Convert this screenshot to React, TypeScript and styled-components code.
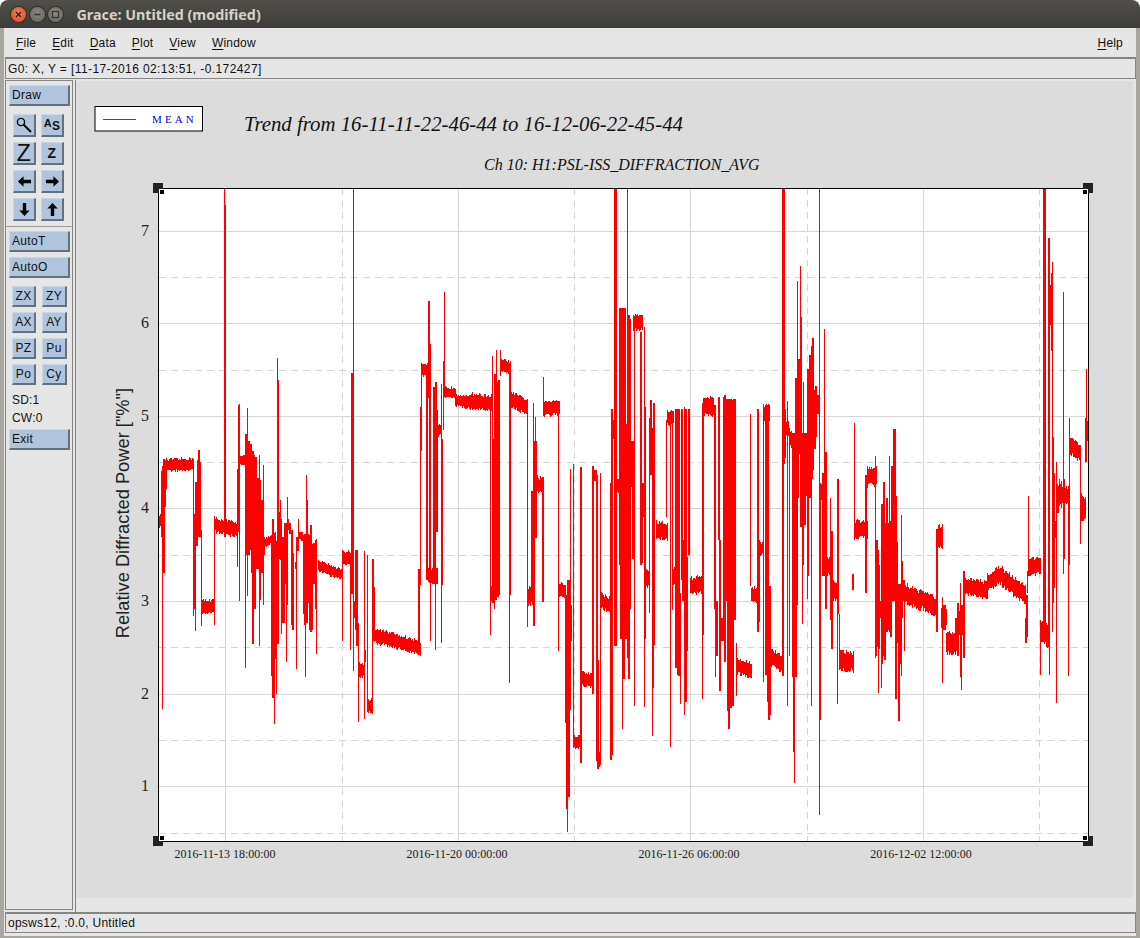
import React from 'react';
import styled, {createGlobalStyle} from 'styled-components';

const GlobalStyle = createGlobalStyle`
  html, body {
    margin: 0;
    padding: 0;
    background: #fff;
  }
`;

const Window = styled.div`
  width: 1140px;
  height: 938px;
  display: flex;
  flex-direction: column;
  overflow: hidden;
  font-family: "Liberation Sans", Arial, sans-serif;
  font-size: 12px;
  color: #111;
`;

const TitleBar = styled.header`
  height: 28px;
  flex: none;
  display: flex;
  align-items: center;
  padding-left: 11px;
  border-radius: 8px 8px 0 0;
  background: linear-gradient(#504f4a, #3d3c38);
`;

const WinButton = styled.span<{$close?: boolean}>`
  width: 15px;
  height: 15px;
  margin-right: 3.5px;
  border-radius: 50%;
  display: flex;
  align-items: center;
  justify-content: center;
  background: ${p => p.$close
    ? 'radial-gradient(circle at 50% 40%, #f0805a, #d8481c)'
    : 'radial-gradient(circle at 50% 40%, #8a8880, #62605a)'};
  box-shadow: 0 0 0 1px #2e2d2a;
`;

const TitleText = styled.span`
  margin-left: 10px;
  font-family: "Noto Sans", sans-serif;
  font-weight: 700;
  font-size: 14.3px;
  color: #d6d2c6;
`;

const Body = styled.div`
  flex: 1;
  min-height: 0;
  display: flex;
  flex-direction: column;
  padding: 0 4px 3px;
  background: linear-gradient(90deg, #a9a69f 4px, #e6e6e6 4px, #e6e6e6 1136px, #a9a69f 1136px);
`;

const MenuBar = styled.nav`
  height: 29px;
  flex: none;
  display: flex;
  align-items: center;
  gap: 16px;
  padding: 0 13px 0 12px;
  background: #e6e6e6;
`;

const MenuItem = styled.span<{$right?: boolean}>`
  letter-spacing: 0.2px;
  ${p => p.$right && 'margin-left: auto;'}

  > u {
    text-underline-offset: 2px;
    text-decoration-thickness: 1px;
  }
`;

const InfoLine = styled.div`
  height: 22px;
  flex: none;
  box-sizing: border-box;
  display: flex;
  align-items: center;
  padding-left: 2px;
  margin-left: 1px;
  background: #e6e6e6;
  border: 1px solid #858585;
  border-top-width: 2px;
  letter-spacing: 0.4px;
`;

const Main = styled.div`
  flex: 1;
  min-height: 0;
  display: flex;
  margin-top: 1px;
`;

const SidePanel = styled.aside`
  width: 68px;
  flex: none;
  box-sizing: border-box;
  margin: 0 0 2px 1px;
  padding: 4px 0 0 3px;
  display: flex;
  flex-direction: column;
  background: #e6e6e6;
  border: 1px solid #858585;
`;

const Bevel = styled.button`
  box-sizing: border-box;
  padding: 0;
  margin: 0;
  display: flex;
  align-items: center;
  font: inherit;
  letter-spacing: 0.3px;
  color: #111;
  background: #b0c4de;
  border-style: solid;
  border-width: 1px 2px 2px 1px;
  border-color: #c9d6e8 #63707f #63707f #c9d6e8;
`;

const WideButton = styled(Bevel)`
  width: 61px;
  height: 21px;
  padding-left: 2px;
`;

const IconGrid = styled.div`
  display: grid;
  grid-template-columns: 22px 22px;
  grid-auto-rows: 22px;
  gap: 6px;
  padding: 8px 0 0 4px;
`;

const IconButton = styled(Bevel)`
  width: 23px;
  height: 23px;
  justify-content: center;
`;

const BigZ = styled.span`
  font-size: 23px;
  line-height: 1;
`;

const SmallZ = styled.span`
  font-size: 14px;
  font-weight: 700;
  line-height: 1;
`;

const AS = styled.span`
  font-size: 11px;
  font-weight: 700;
  line-height: 1;
  margin-top: -4px;

  > b {
    position: relative;
    top: 3px;
    font-size: 12px;
  }
`;

const Separator = styled.hr`
  width: 66px;
  height: 1px;
  margin: 6px 0 4px -3px;
  border: 0;
  background: #9a9a9a;
`;

const AutoButton = styled(WideButton)`
  margin-bottom: 5px;
`;

const TextGrid = styled.div`
  display: grid;
  grid-template-columns: 24px 25px;
  grid-auto-rows: 21px;
  gap: 5px 6px;
  padding: 3px 0 0 3px;
`;

const TextButton = styled(Bevel)`
  justify-content: center;
`;

const ReadOut = styled.div`
  height: 18px;
  display: flex;
  align-items: center;
  padding-left: 3px;
  letter-spacing: 0.2px;
`;

const ReadOuts = styled.div`
  display: flex;
  flex-direction: column;
  padding: 6px 0 2px;
`;

const CanvasArea = styled.div`
  flex: 1;
  min-width: 0;
  margin-left: 2px;
  padding: 1px 3px 0 0;
  border-left: 1px solid #858585;
  background: #e6e6e6;
`;

const PlotCanvas = styled.svg`
  display: block;
  width: 1057px;
  height: 817px;
  background: #dcdcdc;
`;

const StatusBar = styled.footer`
  height: 21px;
  flex: none;
  box-sizing: border-box;
  margin-left: 1px;
  display: flex;
  align-items: center;
  padding-left: 2px;
  background: #e6e6e6;
  border: 1px solid #858585;
  border-top-width: 2px;
  border-bottom-width: 1px;
  letter-spacing: 0.25px;
`;

const BottomEdge = styled.div`
  height: 2px;
  flex: none;
  background: #a9a69f;
`;

const arrow = (deg: number) => (
  <svg width="15" height="15" viewBox="0 0 16 16" style={{transform: `rotate(${deg}deg)`}}>
    <path d="M1 8 L7 2.5 V6.2 H15 V9.8 H7 V13.5 Z" fill="#000"/>
  </svg>
);

// [x, top, bottom, width] of spikes and [x0, x1, y0, y1, half] of noisy plateaus,
// read off crops of the plot; each section has its own offset and scale
type Section = {ox: number; sy: number; bands: number[][]; spikes: number[][]};

const sections: Section[] = [
  {
    ox: 155,
    sy: 2.8,
    bands: [
      [12, 26, 955, 955, 18], [30, 115, 800, 795, 17], [118, 135, 965, 965, 30], [140, 178, 1195, 1195, 20],
      [178, 246, 965, 980, 20], [250, 270, 785, 785, 15], [330, 360, 1015, 1000, 12], [490, 560, 1080, 1105, 15],
      [562, 590, 1055, 1060, 18], [597, 603, 1200, 1200, 20], [612, 628, 1372, 1372, 20], [637, 652, 1472, 1472, 20],
      [658, 795, 1275, 1310, 20], [798, 818, 530, 530, 17], [820, 845, 1110, 1110, 20], [850, 858, 700, 700, 15],
      [868, 900, 595, 595, 15], [900, 960, 615, 625, 17]
    ],
    spikes: [
      [209, 24, 70, 2], [209, 70, 1000, 5], [22, 800, 1480, 2], [19, 815, 1000, 2], [26, 780, 1100, 3], [30, 810, 915, 2], [33, 785, 865, 3],
      [115, 780, 1222, 2], [118, 935, 1200, 3], [121, 890, 1262, 2], [124, 845, 1025, 3], [127, 785, 1025, 2], [133, 756, 1000, 3],
      [136, 790, 1000, 2], [139, 980, 1250, 2], [178, 950, 1245, 2], [248, 810, 1083, 2], [251, 630, 985, 4], [253, 628, 1178, 2],
      [271, 740, 1365, 2], [274, 710, 1050, 4], [277, 638, 1165, 2], [281, 730, 1050, 6], [287, 740, 1035, 6], [290, 760, 1100, 2],
      [295, 760, 1300, 3], [298, 770, 1120, 4], [301, 780, 1200, 3], [304, 775, 1000, 3], [308, 835, 1090, 6], [313, 770, 1305, 2],
      [316, 840, 1175, 5], [320, 895, 1100, 5], [325, 798, 1190, 2], [328, 1000, 1050, 4], [355, 950, 1450, 3], [352, 1000, 1390, 3],
      [358, 1000, 1522, 2], [361, 1000, 1340, 4], [364, 1010, 1438, 2], [367, 498, 1050, 2], [370, 560, 1300, 3], [373, 930, 1060, 5],
      [376, 895, 1065, 2], [379, 950, 1270, 2], [382, 1000, 1240, 5], [386, 1000, 1240, 5], [390, 960, 1130, 3], [394, 960, 1350, 2],
      [397, 888, 1190, 2], [400, 950, 980, 5], [406, 960, 990, 5], [412, 980, 1245, 3], [415, 1045, 1260, 3], [421, 1070, 1090, 2],
      [424, 1000, 1368, 2], [428, 1000, 1040, 4], [431, 948, 1000, 2], [436, 985, 1005, 6], [442, 985, 1010, 5], [446, 995, 1215, 3],
      [449, 990, 1245, 5], [451, 1000, 1392, 2], [454, 827, 1000, 2], [457, 895, 1240, 3], [460, 990, 1185, 3], [463, 1000, 1070, 3],
      [466, 995, 1260, 3], [469, 965, 1265, 3], [472, 1020, 1260, 2], [478, 1015, 1130, 3], [482, 1008, 1200, 5], [485, 1005, 1327, 2],
      [562, 1035, 1290, 2], [587, 1060, 1315, 2], [590, 1050, 1160, 4], [592, 540, 1160, 3], [595, 24, 1375, 2], [598, 1185, 1225, 2],
      [604, 1035, 1260, 3], [607, 1035, 1305, 3], [611, 1240, 1518, 2], [628, 1040, 1508, 2], [631, 1315, 1350, 4], [637, 1050, 1490, 2],
      [652, 1075, 1495, 2], [655, 1060, 1230, 3], [658, 1140, 1290, 3], [793, 1090, 1330, 3], [796, 635, 1135, 2], [798, 520, 760, 2],
      [817, 530, 1120, 3], [821, 338, 610, 4], [826, 460, 1290, 2], [824, 460, 1125, 4], [838, 580, 1130, 3], [841, 615, 1315, 2],
      [844, 565, 985, 3], [847, 645, 985, 3], [850, 690, 720, 4], [859, 570, 1295, 2], [862, 725, 1135, 5], [866, 508, 700, 2], [868, 314, 600, 2]
    ]
  },
  {
    ox: 470,
    sy: 2.376,
    bands: [
      [0, 62, 525, 530, 18], [62, 78, 980, 980, 15], [92, 120, 442, 445, 15], [122, 172, 522, 540, 18], [172, 188, 988, 988, 20],
      [202, 220, 725, 725, 18], [222, 266, 542, 540, 18], [266, 285, 975, 975, 17], [310, 333, 1335, 1335, 15], [335, 370, 1185, 1190, 17],
      [393, 424, 1000, 1010, 18], [438, 456, 725, 725, 17], [490, 515, 338, 338, 18], [528, 538, 945, 945, 20], [557, 590, 832, 835, 20],
      [590, 608, 565, 565, 17], [608, 618, 940, 940, 20], [660, 697, 965, 960, 20], [700, 730, 535, 540, 22], [800, 842, 1155, 1165, 18],
      [842, 860, 985, 985, 18], [866, 880, 875, 875, 15], [878, 898, 555, 555, 20], [900, 938, 1135, 1150, 20]
    ],
    spikes: [
      [61, 520, 1082, 2], [64, 965, 1000, 3], [67, 418, 990, 2], [70, 615, 1005, 4], [73, 615, 1020, 2], [76, 460, 985, 3], [79, 403, 770, 2],
      [83, 480, 990, 6], [87, 475, 985, 5], [91, 403, 465, 2], [118, 445, 1195, 2], [120, 442, 985, 3], [172, 525, 1063, 2], [187, 740, 1000, 3],
      [190, 530, 995, 2], [193, 620, 1060, 3], [196, 563, 850, 2], [199, 620, 850, 3], [202, 700, 740, 3], [218, 705, 1003, 4], [221, 468, 560, 2],
      [265, 530, 1118, 2], [287, 985, 1290, 3], [290, 1040, 1495, 4], [292, 1290, 1550, 2], [294, 950, 1390, 3], [298, 950, 1465, 3], [301, 687, 1260, 2],
      [304, 1010, 1095, 4], [310, 675, 1350, 2], [333, 682, 1385, 5], [370, 680, 1220, 3], [376, 690, 715, 6], [380, 700, 1380, 3], [384, 1140, 1400, 5],
      [388, 1360, 1395, 4], [391, 695, 1390, 2], [422, 720, 1378, 3], [427, 545, 1365, 3], [430, 570, 615, 3], [435, 20, 1108, 6], [438, 650, 740, 2],
      [451, 305, 915, 4], [453, 305, 1090, 3], [458, 305, 1305, 2], [461, 305, 1185, 4], [464, 305, 1090, 3], [467, 580, 1090, 4], [470, 580, 790, 3],
      [473, 320, 1135, 4], [472, 20, 330, 2], [477, 320, 1185, 3], [480, 330, 1020, 5], [485, 620, 730, 4], [488, 620, 900, 3], [492, 345, 1250, 2],
      [514, 360, 915, 3], [517, 720, 910, 5], [520, 720, 800, 2], [523, 348, 1252, 2], [525, 540, 1090, 3], [538, 565, 1028, 2], [543, 522, 700, 4],
      [547, 590, 1320, 2], [549, 590, 1208, 3], [553, 530, 1105, 3], [589, 570, 800, 2], [601, 550, 1348, 2], [606, 550, 1022, 2], [618, 545, 1160, 4],
      [624, 545, 1175, 4], [628, 545, 1178, 3], [631, 980, 1245, 2], [636, 545, 950, 3], [639, 855, 1000, 3], [643, 540, 1270, 2], [648, 545, 1240, 5],
      [652, 895, 1120, 5], [656, 545, 890, 3], [698, 530, 1082, 3], [696, 930, 1232, 2], [734, 535, 1018, 5], [737, 535, 1180, 2], [742, 1000, 1130, 4],
      [746, 515, 855, 4], [750, 855, 1215, 4], [756, 1040, 1095, 6], [761, 515, 1040, 5], [766, 510, 1145, 5], [771, 520, 1000, 4], [775, 800, 1262, 4],
      [778, 520, 1305, 3], [782, 520, 1255, 5], [788, 522, 1250, 5], [794, 520, 1045, 6], [797, 525, 1000, 2], [796, 865, 1045, 4], [799, 1100, 1225, 2],
      [841, 555, 965, 2], [864, 545, 1075, 4], [868, 855, 1050, 2], [880, 532, 1192, 2], [887, 535, 575, 5], [889, 555, 1175, 3], [893, 540, 1240, 4],
      [896, 965, 1283, 3], [900, 965, 1270, 3], [939, 20, 1178, 3], [943, 20, 675, 2]
    ]
  },
  {
    ox: 770,
    sy: 2.376,
    bands: [
      [45, 55, 590, 590, 20], [58, 75, 615, 625, 20], [150, 160, 740, 750, 20], [168, 182, 920, 920, 20], [186, 205, 975, 975, 22],
      [209, 250, 1140, 1145, 22], [253, 290, 830, 830, 20], [290, 317, 705, 705, 22], [402, 450, 980, 1000, 22], [450, 500, 995, 1015, 22],
      [503, 515, 850, 850, 28], [513, 527, 1040, 1040, 25], [527, 560, 1100, 1100, 25], [560, 580, 1045, 1045, 30], [582, 650, 965, 975, 20],
      [650, 695, 955, 935, 20], [695, 765, 945, 985, 22], [775, 810, 920, 915, 20], [812, 838, 1075, 1085, 25], [860, 897, 745, 750, 20],
      [897, 930, 630, 650, 20], [932, 946, 780, 780, 30], [947, 956, 590, 590, 25]
    ],
    spikes: [
      [46, 545, 660, 3], [52, 525, 1250, 2], [58, 590, 1130, 2], [68, 600, 1180, 3], [71, 600, 1360, 4], [73, 1000, 1432, 2], [77, 470, 1180, 5],
      [82, 240, 1010, 2], [85, 600, 755, 3], [88, 425, 650, 3], [91, 205, 600, 2], [94, 325, 825, 5], [97, 600, 1055, 2], [100, 480, 915, 2],
      [104, 600, 820, 4], [108, 600, 750, 3], [112, 490, 995, 2], [115, 450, 940, 4], [119, 415, 755, 4], [124, 490, 1250, 2], [127, 395, 710, 3],
      [130, 375, 690, 3], [134, 500, 640, 5], [137, 490, 610, 3], [142, 510, 555, 8], [148, 20, 1508, 2], [151, 720, 1282, 3], [160, 695, 940, 3],
      [163, 355, 940, 2], [168, 645, 1020, 3], [172, 895, 940, 2], [181, 755, 1045, 2], [185, 835, 1115, 4], [190, 950, 1000, 4], [202, 870, 1245, 2],
      [205, 710, 1030, 4], [208, 1030, 1165, 2], [250, 935, 975, 3], [253, 578, 855, 2], [288, 700, 980, 3], [286, 830, 975, 2], [316, 655, 1135, 2],
      [319, 880, 1130, 4], [322, 855, 1110, 3], [325, 880, 1218, 2], [328, 915, 1115, 4], [331, 1000, 1040, 4], [334, 915, 1208, 2], [337, 770, 1150, 3],
      [341, 718, 1130, 3], [344, 835, 1140, 3], [347, 815, 1060, 5], [351, 755, 1075, 4], [354, 815, 1070, 3], [358, 655, 1075, 2], [362, 810, 1085, 3],
      [366, 680, 1000, 4], [371, 592, 1000, 5], [375, 592, 760, 3], [378, 750, 1232, 3], [382, 860, 1100, 4], [386, 960, 1285, 4], [390, 960, 1150, 3],
      [393, 797, 1178, 2], [396, 905, 1040, 3], [400, 950, 1000, 4], [403, 950, 1118, 2], [502, 830, 1075, 3], [517, 990, 1195, 2], [526, 1010, 1070, 3],
      [558, 1040, 1080, 4], [565, 1005, 1130, 5], [571, 958, 1180, 2], [574, 1010, 1212, 2], [578, 1010, 1080, 4], [581, 930, 1135, 3], [767, 1040, 1100, 3],
      [770, 985, 1085, 3], [774, 750, 930, 2], [771, 930, 980, 2], [811, 1045, 1175, 2], [822, 20, 1065, 6], [831, 1065, 1110, 3], [836, 138, 1110, 3],
      [838, 140, 1175, 2], [842, 250, 345, 5], [845, 220, 405, 4], [847, 195, 1075, 2], [850, 610, 1005, 3], [853, 695, 970, 3], [857, 810, 850, 4],
      [859, 670, 1242, 2], [863, 730, 790, 3], [868, 710, 775, 2], [875, 715, 780, 2], [880, 265, 935, 2], [883, 710, 900, 4], [895, 740, 1178, 2],
      [898, 565, 915, 2], [931, 640, 865, 2], [949, 450, 670, 2], [947, 565, 670, 3]
    ]
  }
];

const buildTrace = () => {
  let seed = 12345;
  const rnd = () => {
    seed = (seed * 16807) % 2147483647;
    return seed / 2147483647;
  };
  const parts: string[] = [];
  sections.forEach(({ox, sy, bands, spikes}) => {
    const y = (z: number) => 180 + z / sy;
    bands.forEach(([x0, x1, y0, y1, half]) => {
      const from = Math.round(ox + x0 / 3);
      const to = Math.round(ox + x1 / 3);
      for (let x = from; x <= to; x++) {
        const t = to === from ? 0 : (x - from) / (to - from);
        const c = y(y0 + (y1 - y0) * t);
        const h = half / sy;
        const top = c - h * (0.7 + rnd() * 0.5);
        const bottom = c + h * (0.7 + rnd() * 0.5);
        parts.push(`M${x} ${top.toFixed(1)}H${x + 1}V${bottom.toFixed(1)}H${x}Z`);
      }
    });
    spikes.forEach(([zx, top, bottom, w]) => {
      const width = Math.max(1, Math.ceil(w / 2.5));
      const x = Math.round(ox + zx / 3 - width / 2);
      parts.push(`M${x} ${y(top).toFixed(1)}H${x + width}V${y(bottom).toFixed(1)}H${x}Z`);
    });
  });
  return parts.join('');
};

const trace = buildTrace();

const solidY = [231, 323, 416, 508, 601, 694, 786];
const dashedY = [277, 370, 462, 555, 647, 740, 833];
const solidX = [225, 458, 690, 923];
const dashedX = [342, 574, 807, 1039];
const yTicks = ['7', '6', '5', '4', '3', '2', '1'];
const xTicks: [number, string][] = [
  [225, '2016-11-13 18:00:00'],
  [457, '2016-11-20 00:00:00'],
  [689, '2016-11-26 06:00:00'],
  [921, '2016-12-02 12:00:00']
];
const handles: [number, number][] = [[158, 188], [1088, 188], [158, 841], [1088, 841]];

const serif = '"Liberation Serif", "Times New Roman", serif';

const Plot = () => (
  <PlotCanvas viewBox="76 81 1057 817">
    <rect x="95" y="106.5" width="107.5" height="24.5" fill="#fff" stroke="#000"/>
    <line x1="103" x2="136" y1="119.5" y2="119.5" stroke="#f00"/>
    <text x="152" y="123" fontFamily={serif} fontSize="11" letterSpacing="3.1" fill="#00f">MEAN</text>
    <text x="244" y="131" fontFamily={serif} fontSize="20.8" fontStyle="italic" fill="#111">
      Trend from 16-11-11-22-46-44 to 16-12-06-22-45-44
    </text>
    <text x="484" y="170" fontFamily={serif} fontSize="16" fontStyle="italic" fill="#111">
      Ch 10: H1:PSL-ISS_DIFFRACTION_AVG
    </text>

    <rect x="159" y="188" width="929" height="653" fill="#fff"/>
    <g stroke="#d6d6d6" strokeWidth="1" shapeRendering="crispEdges">
      {solidY.map(y => <line key={y} x1="159" x2="1088" y1={y + 0.5} y2={y + 0.5}/>)}
      {solidX.map(x => <line key={x} x1={x + 0.5} x2={x + 0.5} y1="188" y2="841"/>)}
      {dashedY.map(y => <line key={y} x1="159" x2="1088" y1={y + 0.5} y2={y + 0.5} strokeDasharray="7 5"/>)}
      {dashedX.map(x => <line key={x} x1={x + 0.5} x2={x + 0.5} y1="188" y2="841" strokeDasharray="7 5"/>)}
    </g>
    <clipPath id="plot-clip">
      <rect x="159" y="188" width="929" height="653"/>
    </clipPath>
    <path d={trace} fill="#f00" clipPath="url(#plot-clip)" shapeRendering="crispEdges"/>
    <rect x="158.5" y="188.5" width="930" height="653" fill="none" stroke="#000" shapeRendering="crispEdges"/>

    {yTicks.map((t, i) => (
      <text key={t} x="141" y={solidY[i] + 5} fontFamily={serif} fontSize="16" fill="#222">{t}</text>
    ))}
    {xTicks.map(([x, t]) => (
      <text key={t} x={x} y="858" textAnchor="middle" fontFamily={serif} fontSize="12" fill="#222">{t}</text>
    ))}
    <text
      transform="translate(129 513) rotate(-90)"
      textAnchor="middle"
      fontFamily='"Liberation Sans", Arial, sans-serif'
      fontSize="18.3"
      fill="#222"
    >
      Relative Diffracted Power ["%"]
    </text>

    {handles.map(([x, y]) => {
      const left = x === 158;
      const top = y === 188;
      return (
        <g key={`${x}-${y}`} shapeRendering="crispEdges">
          <rect x={x - 5} y={y - 5} width="10" height="10" fill="#222"/>
          <rect x={left ? x + 1 : x - 5} y={top ? y + 1 : y - 5} width="5" height="5" fill="#fff"/>
          <rect x={left ? x + 2 : x - 5} y={top ? y + 2 : y - 5} width="4" height="4" fill="#000"/>
        </g>
      );
    })}
  </PlotCanvas>
);

const Mnemonic = ({first, rest}: {first: string; rest: string}) => <><u>{first}</u>{rest}</>;

export default function App() {
  return (
    <Window>
      <GlobalStyle/>
      <TitleBar>
        <WinButton $close>
          <svg width="9" height="9" viewBox="0 0 9 9">
            <path d="M2 2 L7 7 M7 2 L2 7" stroke="#4a1a08" strokeWidth="1.4"/>
          </svg>
        </WinButton>
        <WinButton>
          <svg width="9" height="9" viewBox="0 0 9 9">
            <path d="M1.5 4.5 H7.5" stroke="#35342f" strokeWidth="1.6"/>
          </svg>
        </WinButton>
        <WinButton>
          <svg width="9" height="9" viewBox="0 0 9 9">
            <rect x="1.5" y="1.5" width="6" height="6" fill="none" stroke="#35342f" strokeWidth="1.2"/>
          </svg>
        </WinButton>
        <TitleText>Grace: Untitled (modified)</TitleText>
      </TitleBar>
      <Body>
        <MenuBar>
          <MenuItem><Mnemonic first="F" rest="ile"/></MenuItem>
          <MenuItem><Mnemonic first="E" rest="dit"/></MenuItem>
          <MenuItem><Mnemonic first="D" rest="ata"/></MenuItem>
          <MenuItem><Mnemonic first="P" rest="lot"/></MenuItem>
          <MenuItem><Mnemonic first="V" rest="iew"/></MenuItem>
          <MenuItem><Mnemonic first="W" rest="indow"/></MenuItem>
          <MenuItem $right><Mnemonic first="H" rest="elp"/></MenuItem>
        </MenuBar>
        <InfoLine>G0: X, Y = [11-17-2016 02:13:51, -0.172427]</InfoLine>
        <Main>
          <SidePanel>
            <WideButton>Draw</WideButton>
            <IconGrid>
              <IconButton>
                <svg width="18" height="18" viewBox="0 0 18 18">
                  <circle cx="6" cy="6" r="3.6" fill="none" stroke="#000" strokeWidth="1.4"/>
                  <path d="M8.5 8.5 L16 16" stroke="#000" strokeWidth="2"/>
                </svg>
              </IconButton>
              <IconButton><AS>A<b>S</b></AS></IconButton>
              <IconButton><BigZ>Z</BigZ></IconButton>
              <IconButton><SmallZ>Z</SmallZ></IconButton>
              <IconButton>{arrow(0)}</IconButton>
              <IconButton>{arrow(180)}</IconButton>
              <IconButton>{arrow(-90)}</IconButton>
              <IconButton>{arrow(90)}</IconButton>
            </IconGrid>
            <Separator/>
            <AutoButton>AutoT</AutoButton>
            <AutoButton>AutoO</AutoButton>
            <TextGrid>
              {['ZX', 'ZY', 'AX', 'AY', 'PZ', 'Pu', 'Po', 'Cy'].map(t => <TextButton key={t}>{t}</TextButton>)}
            </TextGrid>
            <ReadOuts>
              <ReadOut>SD:1</ReadOut>
              <ReadOut>CW:0</ReadOut>
            </ReadOuts>
            <WideButton>Exit</WideButton>
          </SidePanel>
          <CanvasArea>
            <Plot/>
          </CanvasArea>
        </Main>
        <StatusBar>opsws12, :0.0, Untitled</StatusBar>
      </Body>
      <BottomEdge/>
    </Window>
  );
}
